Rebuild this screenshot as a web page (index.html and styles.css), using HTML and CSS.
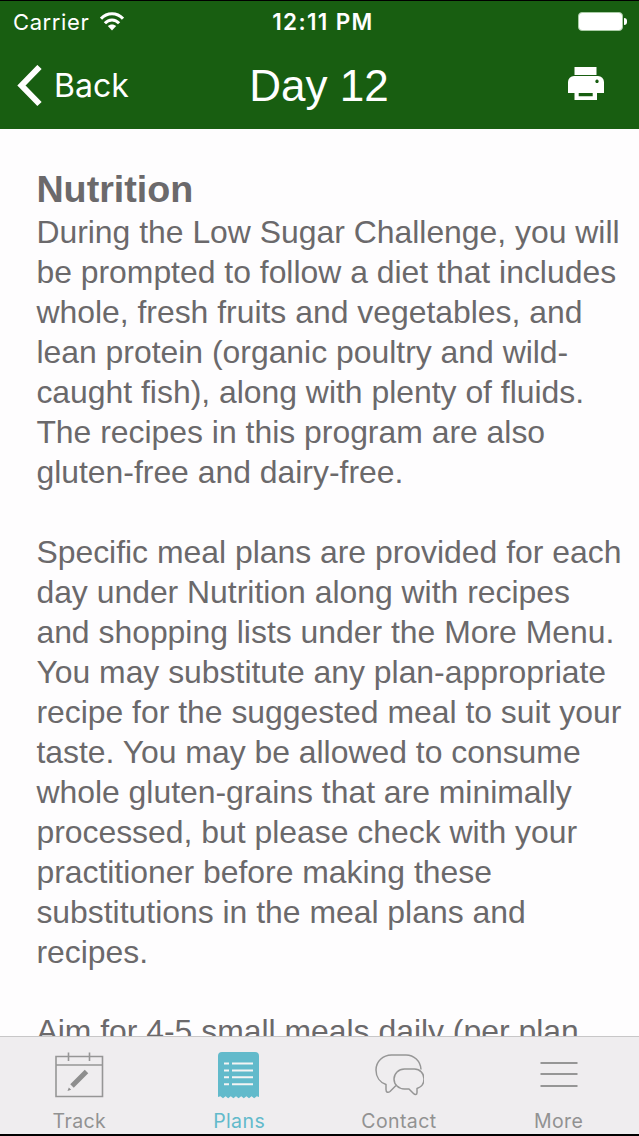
FILE: index.html
```html
<!DOCTYPE html>
<html lang="en">
<head>
    <meta charset="UTF-8">
    <meta name="viewport" content="width=device-width, initial-scale=1.0">
    <title>Day 12</title>
    <link rel="stylesheet" href="styles.css">
</head>
<body>
    <header class="header">
        <div class="status-bar">
            <div class="carrier">
                <span class="carrier-name">Carrier</span>
                <svg class="wifi" width="24" height="19" viewBox="0 0 24 19" fill="none" stroke="#fff" stroke-width="3">
                    <path d="M1 6.700C7 0 17 0 23 6.700"/>
                    <path d="M4.900 11.200c4-4.400 10.200-4.400 14.200 0"/>
                    <path d="M12 18.500l-4.200-4.400c2.200-2.300 6.200-2.300 8.400 0z" fill="#fff" stroke="none"/>
                </svg>
            </div>
            <span class="time">12:11 PM</span>
            <div class="battery">
                <span class="battery-body"></span>
                <span class="battery-tip"></span>
            </div>
        </div>
        <nav class="nav-bar">
            <a class="back" href="#">
                <svg width="26" height="42" viewBox="0 0 26 42" fill="none" stroke="#fff" stroke-width="6">
                    <path d="M23.500 2L5.500 20.500l18 18.500"/>
                </svg>
                <span class="back-label">Back</span>
            </a>
            <h1 class="title">Day 12</h1>
            <a class="print" href="#">
                <svg width="36" height="33" viewBox="0 0 36 33" fill="#fff">
                    <path d="M6.500 0h22v8h-22z"/>
                    <path fill-rule="evenodd" d="M6 9h24a6 6 0 0 1 6 6v11h-7v7H6.500v-7H0V15a6 6 0 0 1 6-6zM10.700 26v3.200h14V26zM29 12.600a1.700 1.700 0 1 0 .01 0z"/>
                </svg>
            </a>
        </nav>
    </header>

    <main class="content">
        <h2>Nutrition</h2>
        <p>
            During the Low Sugar Challenge, you will<br>
            be prompted to follow a diet that includes<br>
            whole, fresh fruits and vegetables, and<br>
            lean protein (organic poultry and wild-<br>
            caught fish), along with plenty of fluids.<br>
            The recipes in this program are also<br>
            gluten-free and dairy-free.
        </p>
        <p>
            Specific meal plans are provided for each<br>
            day under Nutrition along with recipes<br>
            and shopping lists under the More Menu.<br>
            You may substitute any plan-appropriate<br>
            recipe for the suggested meal to suit your<br>
            taste. You may be allowed to consume<br>
            whole gluten-grains that are minimally<br>
            processed, but please check with your<br>
            practitioner before making these<br>
            substitutions in the meal plans and<br>
            recipes.
        </p>
        <p>Aim for 4-5 small meals daily (per plan</p>
    </main>

    <footer class="tab-bar">
        <a class="tab" href="#">
            <svg width="50" height="50" viewBox="0 0 50 50" fill="none" stroke="#969696" stroke-width="1.600">
                <path d="M2 6.500h46.500v40H2zM2 15h46.500M14.500 2.500v8.500M35.500 2.500v8.500"/>
                <path d="M18 36L32.500 21.500" stroke="#8e8e8e" stroke-width="5"/>
                <path d="M13.500 41l1.300-3.500 2.400 2.200z" fill="#8e8e8e" stroke="none"/>
            </svg>
            <span>Track</span>
        </a>
        <a class="tab active" href="#">
            <svg width="50" height="50" viewBox="0 0 50 50">
                <path fill="#62bacb" d="M6 2h35a4 4 0 0 1 4 4v41l-2.200-.8-2.600 2-2.600-2-2.600 2-2.600-2-2.600 2-2.600-2-2.600 2-2.600-2-2.600 2-2.600-2-2.600 2-2.600-2-2.600 2-2.600-2-2.400.8V6a4 4 0 0 1 4-4z"/>
                <path stroke="#f4f4f4" stroke-width="2" d="M10 13.500h5m3 0h21M10 20.500h5m3 0h21M10 27.300h5m3 0h21M10 34.200h5m3 0h21"/>
            </svg>
            <span>Plans</span>
        </a>
        <a class="tab" href="#">
            <svg width="50" height="50" viewBox="0 0 50 50" fill="none" stroke="#969696" stroke-width="1.500" stroke-linejoin="round">
                <path d="M47 19.500C46.500 11 40 5 32 5H17.500C9 5 2 11.500 2 20c0 7 4 12.500 10 14.500v5c0 3 2 3.500 4 2l6-6"/>
                <path d="M30.500 19h10c5.500 0 9.500 4.500 9.500 10 0 4-2.500 8-7 9.500v4c0 2.500-2 2.500-3.500 1L35 39h-4.500c-6 0-10.500-4.500-10.500-10s4.500-10 10.500-10z"/>
            </svg>
            <span>Contact</span>
        </a>
        <a class="tab" href="#">
            <svg width="50" height="50" viewBox="0 0 50 50" fill="none" stroke="#969696" stroke-width="1.800">
                <path d="M6.500 13h37M6.500 24h37M6.500 36h37"/>
            </svg>
            <span>More</span>
        </a>
    </footer>
</body>
</html>
```
FILE: styles.css
```css
* {
    box-sizing: border-box;
}
body {
    margin: 0;
    height: 1136px;
    display: flex;
    flex-direction: column;
    overflow: hidden;
    font-family: "Liberation Sans", Arial, sans-serif;
    background-color: #fefdfe;
}
a {
    color: inherit;
    text-decoration: none;
}
svg {
    display: block;
    flex: none;
}
.header {
    flex: none;
    height: 129px;
    background-color: #185e11;
    border-top: 1px solid #000;
    color: white;
}
.status-bar {
    display: grid;
    grid-template-columns: 1fr auto 1fr;
    align-items: center;
    height: 41px;
    padding: 0 12px 0 13px;
    font-family: Inter, sans-serif;
    font-size: 22px;
}
.carrier {
    display: flex;
    align-items: center;
    gap: 9px;
}
.carrier-name {
    width: 78px;
    letter-spacing: 0.6px;
    white-space: nowrap;
}
.wifi {
    margin-bottom: 1px;
}
.time {
    font-size: 22.500px;
    font-weight: 600;
    letter-spacing: 1.350px;
    padding-left: 6px;
}
.battery {
    display: flex;
    align-items: center;
    justify-content: flex-end;
    gap: 1px;
}
.battery-body {
    width: 45px;
    height: 19px;
    background-color: white;
    border: 1px solid #a9cba5;
    border-radius: 4px;
}
.battery-tip {
    width: 3px;
    height: 7px;
    background-color: white;
    border-radius: 0 3px 3px 0;
}
.nav-bar {
    display: grid;
    grid-template-columns: 1fr auto 1fr;
    align-items: center;
    height: 87px;
    padding: 0 35px 0 16px;
}
.back {
    display: flex;
    align-items: center;
    gap: 12px;
}
.back-label {
    font-family: Inter, sans-serif;
    font-size: 32px;
}
.title {
    margin: 0 0 0 18px;
    font-size: 44px;
    font-weight: normal;
}
.print {
    justify-self: end;
    margin-bottom: 5px;
}
.content {
    flex: 1;
    min-height: 0;
    overflow: hidden;
    padding: 37px 0 0 36.400px;
    color: #6b696b;
    font-size: 31.900px;
    line-height: 39.950px;
    white-space: nowrap;
}
.content h2 {
    margin: 0 0 1.400px;
    font-size: 37.700px;
    line-height: 46px;
}
.content p {
    margin: 0 0 39.950px;
}
.tab-bar {
    flex: none;
    display: grid;
    grid-template-columns: repeat(4, 1fr);
    height: 100px;
    background-color: #efedef;
    border-top: 1px solid #c8c7c8;
    border-bottom: 2px solid #000;
}
.tab {
    display: flex;
    flex-direction: column;
    align-items: center;
    padding-top: 13px;
    padding-right: 1px;
    gap: 9px;
    color: #929292;
    font-family: Inter, sans-serif;
    font-size: 19.500px;
    line-height: 24px;
    letter-spacing: 0.400px;
}
.tab.active {
    color: #62bacb;
}
```
